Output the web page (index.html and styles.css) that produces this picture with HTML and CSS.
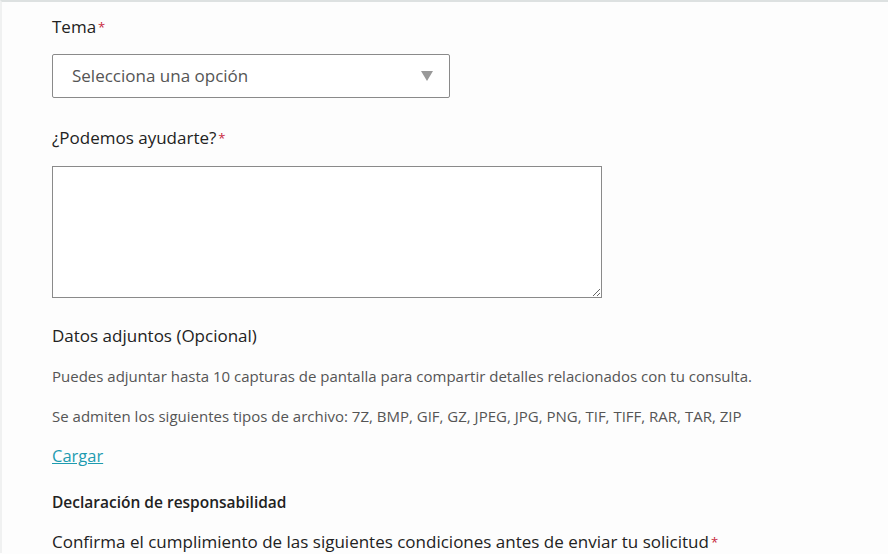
FILE: index.html
```html
<!DOCTYPE html>
<html lang="es">
<head>
    <meta charset="UTF-8">
    <title>Formulario de soporte</title>
    <link rel="stylesheet" href="styles.css">
</head>
<body>
    <div class="page">
        <form class="request-form">
            <div class="field">
                <label class="field-label" for="tema">Tema<span class="req">*</span></label>
                <div class="select-box" id="tema">
                    <span class="select-text">Selecciona una opción</span>
                    <span class="select-arrow"></span>
                </div>
            </div>
            <div class="field">
                <label class="field-label" for="ayuda">¿Podemos ayudarte?<span class="req">*</span></label>
                <textarea class="text-box" id="ayuda"></textarea>
            </div>
            <div class="field attach">
                <div class="field-label">Datos adjuntos (Opcional)</div>
                <p class="hint">Puedes adjuntar hasta 10 capturas de pantalla para compartir detalles relacionados con tu consulta.</p>
                <p class="hint">Se admiten los siguientes tipos de archivo: 7Z, BMP, GIF, GZ, JPEG, JPG, PNG, TIF, TIFF, RAR, TAR, ZIP</p>
                <a class="upload-link" href="#">Cargar</a>
            </div>
            <div class="field">
                <div class="section-title">Declaración de responsabilidad</div>
                <div class="field-label">Confirma el cumplimiento de las siguientes condiciones antes de enviar tu solicitud<span class="req">*</span></div>
            </div>
        </form>
    </div>
</body>
</html>
```
FILE: styles.css
```css
body {
    margin: 0;
    background: #fdfdfd;
    font-family: 'Open Sans', Lato, sans-serif;
    color: #222;
}
.page {
    border-top: 2px solid #dde1e1;
    border-left: 2px solid #f0f1f1;
    min-height: 552px;
    box-sizing: border-box;
    padding: 14px 0 0 50px;
}
.request-form {
    display: flex;
    flex-direction: column;
}
.field-label {
    display: block;
    font-size: 17px;
    line-height: 22px;
}
.req {
    color: #c8283c;
    font-size: 13px;
    vertical-align: top;
    margin-left: 2px;
}
.select-box {
    margin-top: 16px;
    width: 398px;
    height: 44px;
    box-sizing: border-box;
    border: 1px solid #8a8a8a;
    border-radius: 2px;
    background: #fff;
    display: flex;
    align-items: center;
    justify-content: space-between;
    padding: 0 16px 1px 19px;
}
.select-text {
    font-size: 17px;
    color: #555;
}
.select-arrow {
    width: 0;
    height: 0;
    border-left: 6px solid transparent;
    border-right: 6px solid transparent;
    border-top: 10px solid #999;
}
.field + .field {
    margin-top: 29px;
}
.text-box {
    display: block;
    margin-top: 17px;
    width: 550px;
    height: 132px;
    box-sizing: border-box;
    border: 1px solid #8a8a8a;
    border-radius: 0;
    background: #fff;
    font-family: inherit;
}
.attach {
    display: flex;
    flex-direction: column;
}
.field.attach {
    margin-top: 27px;
}
.attach .field-label {
    margin-bottom: 18px;
}
.hint {
    margin: 0 0 18px;
    font-size: 15px;
    line-height: 22px;
    color: #555;
}
.upload-link {
    font-size: 16.5px;
    line-height: 22px;
    color: #1d9bb0;
    text-decoration: underline;
    align-self: flex-start;
}
.section-title {
    font-size: 15.5px;
    font-weight: 600;
    line-height: 22px;
    margin-bottom: 18px;
}
.field.attach + .field {
    margin-top: 24px;
}
```
